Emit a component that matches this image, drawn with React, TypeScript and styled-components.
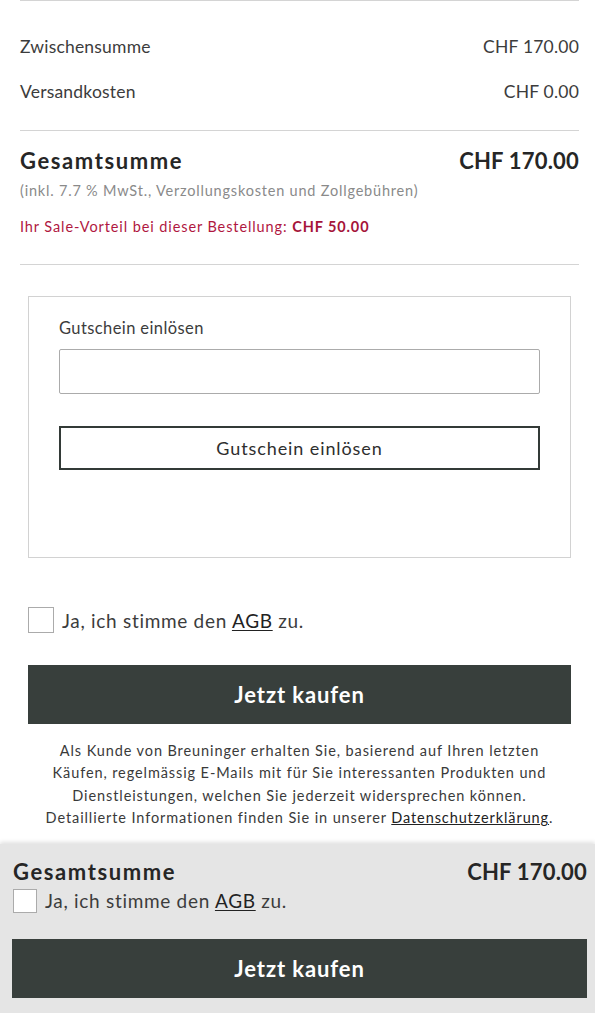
import React, { useState } from 'react';
import styled, { createGlobalStyle } from 'styled-components';

const GlobalStyle = createGlobalStyle`
    * { box-sizing: border-box; }
    body {
        margin: 0;
        background: #fff;
        font-family: 'Lato', 'Liberation Sans', sans-serif;
        color: #3a3a3a;
    }
`;

const Page = styled.div`
    display: flex;
    flex-direction: column;
    width: 595px;
`;

const Content = styled.div`
    padding: 0 16px 0 20px;
`;

const Summary = styled.div`
    display: flex;
    flex-direction: column;
    gap: 21px;
    padding: 33px 0 27px;
    border-top: 1px solid #d4d4d4;
`;

const Row = styled.div`
    display: flex;
    justify-content: space-between;
    align-items: center;
    height: 24px;
    font-size: 17.5px;
    letter-spacing: 0.2px;
    color: #3c3c3c;
`;

const Total = styled.div`
    display: flex;
    flex-direction: column;
    padding: 17px 0 27px;
    border-top: 1px solid #d4d4d4;
    border-bottom: 1px solid #d4d4d4;
`;

const TotalRow = styled.div`
    display: flex;
    justify-content: space-between;
    align-items: center;
    line-height: 26px;
    font-size: 22px;
    font-weight: 700;
    color: #262626;
`;

const TotalLabel = styled.span`
    letter-spacing: 1.6px;
`;

const TotalPrice = styled.span`
    letter-spacing: 0.2px;
`;

const Note = styled.div`
    margin-top: 7px;
    line-height: 20px;
    font-size: 14.5px;
    letter-spacing: 0.8px;
    color: #8a8a8a;
`;

const Sale = styled.div`
    margin-top: 16px;
    line-height: 20px;
    font-size: 14.5px;
    letter-spacing: 0.9px;
    color: #b0173f;

    strong {
        font-weight: 700;
        color: #a5143a;
    }
`;

const CouponBox = styled.div`
    display: flex;
    flex-direction: column;
    margin: 31px 8px 0;
    padding: 20px 30px 87px;
    border: 1px solid #d2d2d2;
`;

const Label = styled.label`
    line-height: 22px;
    font-size: 16.5px;
    letter-spacing: 0.4px;
    color: #3c3c3c;
`;

const Input = styled.input`
    margin-top: 10px;
    height: 45px;
    border: 1px solid #ababab;
    border-radius: 2px;
    padding: 0 12px;
    font: inherit;
    font-size: 16px;
`;

const OutlineButton = styled.button`
    margin-top: 32px;
    height: 44px;
    border: 2px solid #333a37;
    background: #fff;
    font-family: inherit;
    font-size: 18px;
    letter-spacing: 0.9px;
    color: #2e2e2e;
`;

const Agree = styled.label`
    display: flex;
    align-items: center;
    gap: 8px;
    font-size: 19px;
    letter-spacing: 0.7px;
    color: #3c3c3c;

    a {
        color: #222;
        text-decoration: underline;
        text-underline-offset: 2px;
    }
`;

const CheckBox = styled.span<{ $box: number }>`
    width: ${(p) => p.$box}px;
    height: ${(p) => p.$box}px;
    flex: none;
    background: #fff;
    border: 1px solid #ababab;
`;

const AgreeWrap = styled.div`
    margin: 49px 8px 0;
`;

const BuyButton = styled.button<{ $top: number }>`
    margin-top: ${(p) => p.$top}px;
    width: 100%;
    height: 59px;
    border: none;
    background: #383f3c;
    color: #fff;
    font-family: inherit;
    font-size: 22px;
    letter-spacing: 0.9px;
    font-weight: 700;
`;

const BuyWrap = styled.div`
    margin: 0 8px;
`;

const Legal = styled.p`
    margin: 16px 0 0;
    text-align: center;
    font-size: 14.5px;
    line-height: 22.4px;
    color: #3a3a3a;
    letter-spacing: 0.9px;

    a {
        color: #222;
        text-decoration: underline;
    }
`;

const StickyBar = styled.div`
    margin-top: 14px;
    display: flex;
    flex-direction: column;
    padding: 15px 8px 16px 13px;
    background: #e5e5e5;
    box-shadow: 0 -2px 4px rgba(0, 0, 0, 0.12);
`;

const StickyAgree = styled.div`
    margin-top: 4px;
`;

const StickyBuy = styled.div`
    margin-left: -1px;
`;

const App = () => {
    const [code, setCode] = useState('');

    return (
        <>
            <GlobalStyle />
            <Page>
                <Content>
                    <Summary>
                        <Row>
                            <span>Zwischensumme</span>
                            <span>CHF 170.00</span>
                        </Row>
                        <Row>
                            <span>Versandkosten</span>
                            <span>CHF 0.00</span>
                        </Row>
                    </Summary>
                    <Total>
                        <TotalRow>
                            <TotalLabel>Gesamtsumme</TotalLabel>
                            <TotalPrice>CHF 170.00</TotalPrice>
                        </TotalRow>
                        <Note>(inkl. 7.7 % MwSt., Verzollungskosten und Zollgebühren)</Note>
                        <Sale>
                            Ihr Sale-Vorteil bei dieser Bestellung: <strong>CHF 50.00</strong>
                        </Sale>
                    </Total>
                    <CouponBox>
                        <Label htmlFor="coupon">Gutschein einlösen</Label>
                        <Input id="coupon" value={code} onChange={(e) => setCode(e.target.value)} />
                        <OutlineButton>Gutschein einlösen</OutlineButton>
                    </CouponBox>
                    <AgreeWrap>
                        <Agree>
                            <CheckBox $box={26} />
                            <span>
                                Ja, ich stimme den <a href="#">AGB</a> zu.
                            </span>
                        </Agree>
                    </AgreeWrap>
                    <BuyWrap>
                        <BuyButton $top={32}>Jetzt kaufen</BuyButton>
                    </BuyWrap>
                    <Legal>
                        Als Kunde von Breuninger erhalten Sie, basierend auf Ihren letzten
                        <br />
                        Käufen, regelmässig E-Mails mit für Sie interessanten Produkten und
                        <br />
                        Dienstleistungen, welchen Sie jederzeit widersprechen können.
                        <br />
                        Detaillierte Informationen finden Sie in unserer <a href="#">Datenschutzerklärung</a>.
                    </Legal>
                </Content>
                <StickyBar>
                    <TotalRow>
                        <TotalLabel>Gesamtsumme</TotalLabel>
                        <TotalPrice>CHF 170.00</TotalPrice>
                    </TotalRow>
                    <StickyAgree>
                        <Agree>
                            <CheckBox $box={24} />
                            <span>
                                Ja, ich stimme den <a href="#">AGB</a> zu.
                            </span>
                        </Agree>
                    </StickyAgree>
                    <StickyBuy>
                        <BuyButton $top={26}>Jetzt kaufen</BuyButton>
                    </StickyBuy>
                </StickyBar>
            </Page>
        </>
    );
};

export default App;
